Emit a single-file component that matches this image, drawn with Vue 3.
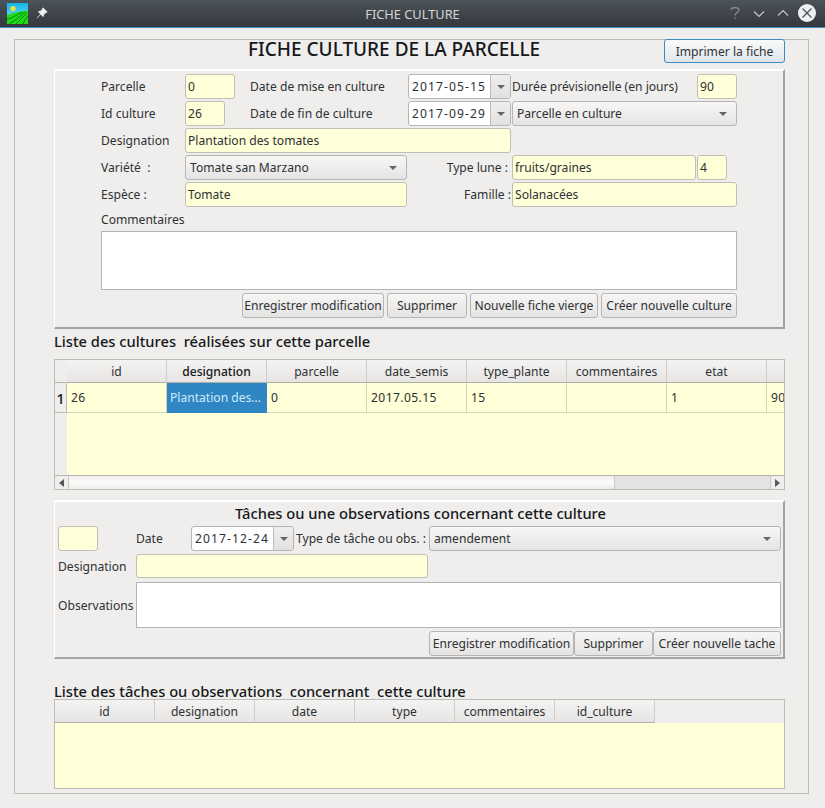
<script setup>
const cols1 = ['id','designation','parcelle','date_semis','type_plante','commentaires','etat','']
const cells1 = ['26','Plantation des…','0','2017.05.15','15','','1','90']
const cols2 = ['id','designation','date','type','commentaires','id_culture']
const variete = 'Variété  :'
const list1 = 'Liste des cultures  réalisées sur cette parcelle'
const list2 = 'Liste des tâches ou observations  concernant  cette culture'
</script>

<template>
  <div class="win">
    <header class="titlebar">
      <svg class="appicon" width="21" height="21" viewBox="0 0 21 21">
        <defs><linearGradient id="sky" x1="0" y1="0" x2="0" y2="1"><stop offset="0" stop-color="#12b5e8"/><stop offset="1" stop-color="#8fe6f4"/></linearGradient></defs>
        <rect width="21" height="21" fill="url(#sky)"/>
        <circle cx="6" cy="5.5" r="2.6" fill="#f4e23a"/>
        <path d="M0 12 C6 10 13 8 21 7.5 V21 H0Z" fill="#1fdc16"/>
        <path d="M0 16.5 C5 15 10 12 15 9 M2 21 C7 18 13 14 18 8.5 M9 21 C12 18 16 14 20 9.5 M16 21 C17 18 19 15 21 13" stroke="#0a7a10" stroke-width="1" fill="none"/>
      </svg>
      <svg class="pin" width="12" height="12" viewBox="0 0 12 12"><path d="M7 0.8 L11.2 5 L9.8 5.6 L7.8 7.6 L7.4 9.4 L6 8.6 L3.4 6 L2.6 4.6 L4.4 4.2 L6.4 2.2Z M4.4 7.6 L1 11" fill="#eff0f1" stroke="#eff0f1" stroke-width="0.8"/></svg>
      <span class="wintitle">FICHE CULTURE</span>
      <svg class="ctl q" width="12" height="14" viewBox="0 0 12 14"><path d="M2 4 C2 1 10 0.5 10 4 C10 6.5 6 6.5 6 9.5 M6 11.5 V13" fill="none" stroke="#8e9295" stroke-width="1.2"/></svg>
      <svg class="ctl down" width="12" height="8" viewBox="0 0 12 8"><path d="M1 1.5 L6 6.5 L11 1.5" fill="none" stroke="#c6c9cb" stroke-width="1.2"/></svg>
      <svg class="ctl up" width="12" height="8" viewBox="0 0 12 8"><path d="M1 6.5 L6 1.5 L11 6.5" fill="none" stroke="#c6c9cb" stroke-width="1.2"/></svg>
      <svg class="ctl close" width="18" height="18" viewBox="0 0 18 18"><circle cx="9" cy="9" r="9" fill="#eff0f1"/><path d="M4.5 4.5 L13.5 13.5 M13.5 4.5 L4.5 13.5" stroke="#4d5257" stroke-width="1.3"/></svg>
    </header>

    <main class="frame">
      <div class="top">
        <h1>FICHE CULTURE DE LA PARCELLE</h1>
        <button class="btn print">Imprimer la fiche</button>
      </div>

      <section class="panel p1">
        <div class="form1">
          <label class="l" style="grid-area:1/1">Parcelle</label>
          <div class="inp" style="grid-area:1/2/1/4">0</div>
          <label class="l" style="grid-area:1/5">Date de mise en culture</label>
          <div class="date" style="grid-area:1/7"><span>2017-05-15</span><i class="spin"><b class="arrow"></b></i></div>
          <label class="l" style="grid-area:1/9">Durée prévisionelle (en jours)</label>
          <div class="inp" style="grid-area:1/11/1/13">90</div>

          <label class="l" style="grid-area:2/1">Id culture</label>
          <div class="inp" style="grid-area:2/2">26</div>
          <label class="l" style="grid-area:2/5">Date de fin de culture</label>
          <div class="date" style="grid-area:2/7"><span>2017-09-29</span><i class="spin"><b class="arrow"></b></i></div>
          <div class="sel" style="grid-area:2/9/2/13"><span>Parcelle en culture</span><b class="arrow"></b></div>

          <label class="l" style="grid-area:3/1">Designation</label>
          <div class="inp" style="grid-area:3/2/3/8">Plantation des tomates</div>

          <label class="l" style="grid-area:4/1">{{ variete }}</label>
          <div class="sel" style="grid-area:4/2/4/6"><span>Tomate san Marzano</span><b class="arrow"></b></div>
          <label class="l right tl" style="grid-area:4/5/4/8">Type lune :</label>
          <div class="inp" style="grid-area:4/9">fruits/graines</div>
          <div class="inp" style="grid-area:4/11">4</div>

          <label class="l" style="grid-area:5/1">Espèce :</label>
          <div class="inp" style="grid-area:5/2/5/6">Tomate</div>
          <label class="l right" style="grid-area:5/5/5/8">Famille :</label>
          <div class="inp" style="grid-area:5/9/5/13">Solanacées</div>
        </div>
        <label class="l comm">Commentaires</label>
        <div class="area a1"></div>
        <div class="btns b1">
          <button class="btn w142">Enregistrer modification</button>
          <button class="btn w80">Supprimer</button>
          <button class="btn w128">Nouvelle fiche vierge</button>
          <button class="btn w136">Créer nouvelle culture</button>
        </div>
      </section>

      <h2 class="h-list">{{ list1 }}</h2>
      <div class="table t1">
        <div class="thead">
          <div class="corner"></div>
          <div v-for="(c, i) in cols1" :key="i" class="th" :class="{ cur: i === 1, last: i === 7 }">{{ c }}</div>
        </div>
        <div class="tr">
          <div class="rowhead">1</div>
          <div v-for="(c, i) in cells1" :key="i" class="td" :class="{ selected: i === 1, last: i === 7 }">{{ c }}</div>
        </div>
        <div class="tbody-empty"><div class="gutter"></div></div>
        <div class="scroll">
          <div class="sbtn"><b class="tri left"></b></div>
          <div class="slider"></div>
          <div class="groove"></div>
          <div class="sbtn r"><b class="tri right"></b></div>
        </div>
      </div>

      <section class="panel p2">
        <h3>Tâches ou une observations concernant cette culture</h3>
        <div class="form2">
          <div class="inp" style="grid-area:1/1"></div>
          <label class="l" style="grid-area:1/3">Date</label>
          <div class="date" style="grid-area:1/4"><span>2017-12-24</span><i class="spin"><b class="arrow"></b></i></div>
          <label class="l" style="grid-area:1/6">Type de tâche ou obs. :</label>
          <div class="sel" style="grid-area:1/7"><span>amendement</span><b class="arrow"></b></div>

          <label class="l" style="grid-area:2/1/2/3">Designation</label>
          <div class="inp f2des" style="grid-area:2/3/2/7"></div>

          <label class="l f2obs" style="grid-area:3/1/3/3">Observations</label>
          <div class="area f2area" style="grid-area:3/3/3/8"></div>

          <div class="btns b2" style="grid-area:4/7">
            <button class="btn">Enregistrer modification</button>
            <button class="btn">Supprimer</button>
            <button class="btn">Créer nouvelle tache</button>
          </div>
        </div>
      </section>

      <h2 class="h-list2">{{ list2 }}</h2>
      <div class="table t2">
        <div class="thead">
          <div v-for="(c, i) in cols2" :key="i" class="th">{{ c }}</div>
          <div class="th-rest"></div>
        </div>
        <div class="t2body"></div>
      </div>
    </main>
  </div>
</template>

<style scoped>
* { box-sizing: border-box; }
.win {
  width: 825px; height: 808px; background: #efeeec; overflow: hidden;
  font-family: "Noto Sans", sans-serif; font-size: 12.1px; color: #2d3135;
  display: flex; flex-direction: column;
}
.titlebar {
  height: 28px; flex: none; display: flex; align-items: center; position: relative;
  background: linear-gradient(#4c5359, #32373c); border-bottom: 1px solid #3d8fc4;
  color: #d3d5d7; padding-left: 7px;
}
.appicon { margin-top: -1px; }
.pin { margin-left: 8px; margin-top: -1px; }
.wintitle { position: absolute; left: 0; right: 0; top: 5px; text-align: center; font-size: 12.8px; }
.ctl { position: absolute; }
.q { left: 729px; top: 6px; }
.down { left: 753px; top: 10px; }
.up { left: 777px; top: 9px; }
.close { left: 798px; top: 4px; }

.frame {
  margin: 11px 16px 0 14px; height: 755px; width: 795px; flex: none;
  border: 1px solid #bdbcb9; padding: 0 23px 0 39px;
}
.top { height: 29px; display: flex; align-items: flex-start; }
h1 {
  margin: -2px 0 0 194px; font-size: 19px; font-weight: 500; color: #16181a;
  line-height: 22px; white-space: nowrap;
}
.btn {
  font: inherit; color: #2d3135; height: 25px; padding: 0; white-space: nowrap;
  border: 1px solid #b4b5b5; border-radius: 3px;
  background: linear-gradient(#f7f6f5, #e4e3e1);
}
.print { width: 121px; height: 24px; margin-left: auto; margin-top: -1px; border-color: #3b8cc4; background: linear-gradient(#fafafa, #dfe6eb); }

.panel {
  width: 731px; background: #efeeec;
  border-top: 2px solid #fff; border-left: 1px solid #fff;
  border-right: 2px solid #a3a3a1; border-bottom: 2px solid #a3a3a1;
}
.p1 { height: 260px; padding: 3px 0 0 46px; }
.form1 {
  display: grid; grid-auto-rows: 25px; row-gap: 2px;
  grid-template-columns: 84px 40px 10px 15px 157px 1px 103px 1px 184px 1px 30px 10px;
}
.l { display: flex; align-items: center; white-space: pre; height: 25px; }
.right { justify-content: flex-end; }
.tl { padding-right: 3px; }
.inp, .sel, .date {
  height: 25px; border: 1px solid #bfbfb8; border-radius: 3px; display: flex; align-items: center;
  white-space: nowrap; overflow: hidden;
}
.inp { background: #ffffd8; padding-left: 2px; }
.sel {
  background: linear-gradient(#f8f7f6, #e5e4e2); padding: 0 9px 0 4px; justify-content: space-between;
  border-color: #b4b5b5;
}
.date { background: #fff; border-color: #b4b5b5; padding-left: 3px; letter-spacing: 1.1px; }
.date span { flex: 1; }
.spin {
  width: 20px; height: 100%; flex: none; background: linear-gradient(#efeeed, #e2e1df);
  border-left: 1px solid #bcbcbc; display: flex; align-items: center; justify-content: center;
}
.arrow {
  display: block; width: 0; height: 0; border-left: 4px solid transparent; border-right: 4px solid transparent;
  border-top: 4px solid #62666a;
}
.comm { height: 18px; margin-top: 3px; }
.area { background: #fff; border: 1px solid #b4b5b3; }
.a1 { width: 636px; height: 59px; margin-top: 3px; }
.btns { display: flex; }
.b1 { width: 636px; justify-content: flex-end; gap: 3px; margin-top: 3px; }
.w142 { width: 142px; } .w80 { width: 80px; } .w128 { width: 128px; } .w136 { width: 136px; }

.h-list, .h-list2 { margin: 0; font-size: 14.7px; font-weight: 500; color: #16181a; white-space: pre; line-height: 20px; }
.h-list { padding-top: 2px; height: 30px; }
.h-list2 { height: 18px; margin-top: 22px; line-height: 20px; }

.table { width: 731px; border: 1px solid #bcbcb9; overflow: hidden; background: #ffffd8; }
.t1 { height: 131px; display: flex; flex-direction: column; }
.thead { display: flex; height: 23px; flex: none; }
.corner { width: 12px; background: #efeeec; border-bottom: 1px solid #b4b4b1; border-right: 1px solid transparent; flex: none; }
.th {
  width: 100px; flex: none; display: flex; align-items: center; justify-content: center;
  background: linear-gradient(#f4f3f2, #e6e5e3); border-right: 1px solid #cdccc9; border-bottom: 1px solid #aeaeab;
}
.th.cur { font-weight: 500; color: #16181a; }
.th.last { width: 19px; border-right: 0; }
.tr { display: flex; height: 30px; flex: none; }
.rowhead {
  width: 12px; flex: none; background: #efeeec; border-right: 1px solid #bcbcb9; border-bottom: 1px solid #bcbcb9;
  font-weight: 500; font-size: 15px; color: #16181a; display: flex; align-items: center; justify-content: center;
}
.td {
  width: 100px; flex: none; border-right: 1px solid #d4d3bd; border-bottom: 1px solid #d4d3bd;
  display: flex; align-items: center; padding-left: 4px; white-space: nowrap; overflow: hidden; letter-spacing: 0.4px;
}
.td.selected { background: #2f86c2; color: #cfeafc; padding-left: 3px; border-color: #2f86c2; letter-spacing: 0; }
.td.last { width: 19px; border-right: 0; }
.tbody-empty { flex: 1; display: flex; }
.gutter { width: 12px; background: #efeeec; }
.scroll { height: 14px; flex: none; display: flex; border-top: 1px solid #b4b4b1; background: #e4e3e1; }
.sbtn { width: 14px; flex: none; background: #efeeec; display: flex; align-items: center; justify-content: center; border-right: 1px solid #c9c9c6; }
.sbtn.r { border-right: 0; border-left: 1px solid #c9c9c6; }
.slider { width: 546px; flex: none; background: linear-gradient(#efeeec, #fbfbfa 50%, #ecebe9); border-right: 1px solid #c9c9c6; }
.groove { flex: 1; }
.tri { display: block; width: 0; height: 0; border-top: 4px solid transparent; border-bottom: 4px solid transparent; }
.tri.left { border-right: 5px solid #55595c; }
.tri.right { border-left: 5px solid #55595c; }

.p2 { height: 159px; margin-top: 10px; padding: 0 0 0 3px; }
h3 { margin: 0; height: 24px; text-align: center; font-size: 14.7px; font-weight: 500; color: #16181a; line-height: 22px; }
.form2 {
  display: grid;
  grid-template-columns: 40px 38px 55px 103px 2px 133px 352px;
  grid-template-rows: 25px 24px 47px 25px; row-gap: 3px;
}
.form2 .inp, .form2 .sel, .form2 .date, .form2 .l { height: 100%; }
.f2des { margin-right: 1px; }
.f2area { margin-top: 1px; }
.form2 .f2obs { padding-top: 2px; }
.b2 .btn { flex: none; }
.b2 .btn:nth-child(1) { width: 145px; }
.b2 .btn:nth-child(2) { width: 79px; }
.b2 .btn:nth-child(3) { width: 128px; }

.t2 { height: 90px; }
.t2 .thead { height: 23px; }
.th-rest { flex: 1; background: #efeeec; }
.t2body { height: 66px; }
</style>
